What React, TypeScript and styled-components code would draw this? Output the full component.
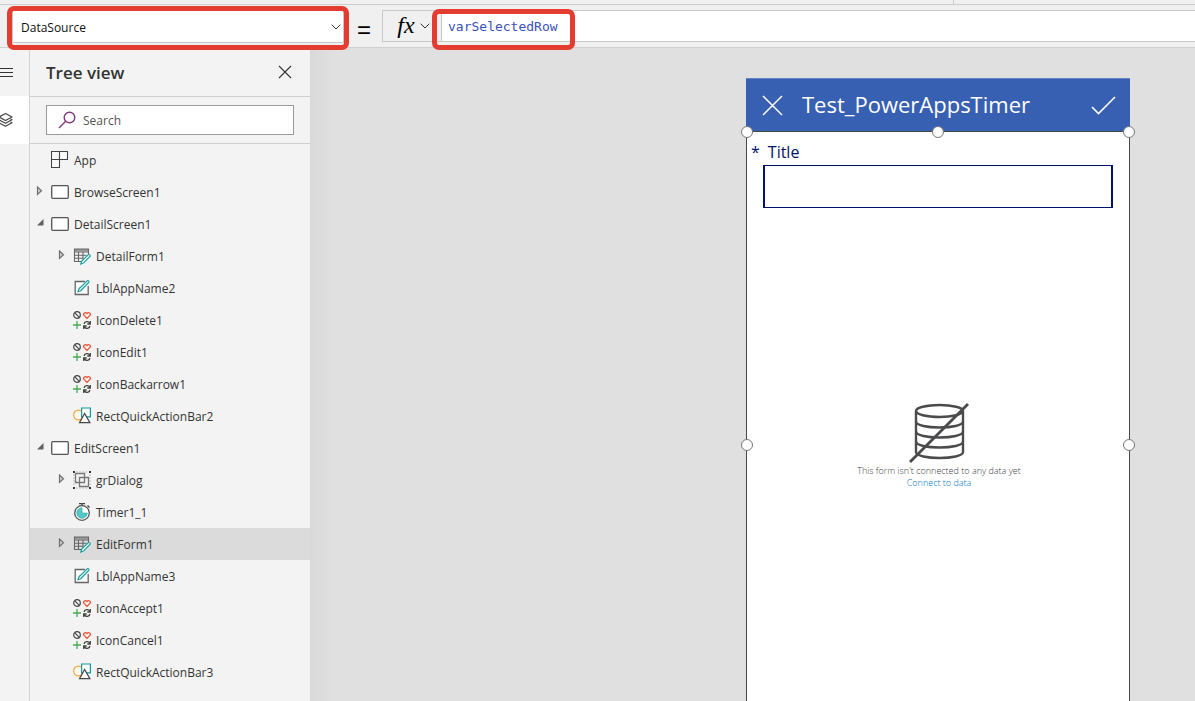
import React from "react";
import styled, { createGlobalStyle, css } from "styled-components";

const GlobalStyle = createGlobalStyle`
  *, *::before, *::after { box-sizing: border-box; }
  body {
    margin: 0;
    overflow: hidden;
    background: #e0e0e0;
    color: #333;
    font-family: "Open Sans", "Noto Sans", sans-serif;
    font-size: 12px;
  }
  button, input, select { font: inherit; color: inherit; margin: 0; border-radius: 0; }
  button { padding: 0; border: 0; background: none; cursor: pointer; }
  svg { display: block; flex: none; }
`;

const Page = styled.div`
  display: flex;
  flex-direction: column;
  height: 100vh;
`;

const RibbonEdge = styled.div`
  display: flex;
  justify-content: flex-end;
  flex: none;
  height: 5px;
  background: #f0f0f0;
  border-bottom: 1px solid #cdcdcd;
`;

const RibbonSection = styled.div`
  width: 242px;
  border-left: 1px solid #cdcdcd;
`;

const FormulaBar = styled.header`
  display: flex;
  align-items: flex-start;
  flex: none;
  height: 43px;
  padding: 5px 0 0 12px;
  background: #f0f0f0;
  border-bottom: 1px solid #d0d0d0;
`;

const Marker = styled.span<{ $inset: string; $width?: string }>`
  position: absolute;
  inset: ${(p) => p.$inset};
  width: ${(p) => p.$width ?? "auto"};
  border: 5px solid #e53c31;
  border-radius: 7px;
  pointer-events: none;
`;

const PropertyPicker = styled.div`
  position: relative;
  width: 332px;
  height: 33px;
  flex: none;
  color: #111;

  svg {
    position: absolute;
    right: 3px;
    top: 14px;
    pointer-events: none;
  }
`;

const PropertySelect = styled.select`
  appearance: none;
  width: 100%;
  height: 100%;
  padding: 2px 24px 0 8px;
  background: #fff;
  border: 1px solid #c8c8c8;
  font-size: 12px;
`;

const EqualsSign = styled.span`
  width: 38px;
  padding: 2px 0 0 2px;
  flex: none;
  text-align: center;
  color: #000;
  font: 24px/36px "Liberation Sans", sans-serif;
`;

const FxButton = styled.button`
  display: flex;
  align-items: center;
  justify-content: center;
  gap: 5px;
  flex: none;
  width: 59px;
  height: 32px;
  padding-left: 3px;
  border: 1px solid #c8c8c8;
  border-right: 0;
  color: #000;
`;

const FxLabel = styled.span`
  padding-bottom: 2px;
  font: italic 400 24px/28px "Liberation Serif", serif;
`;

const FormulaField = styled.div`
  position: relative;
  flex: 1;
  height: 32px;
`;

const FormulaInput = styled.input`
  width: 100%;
  height: 100%;
  padding: 0 7px 0 6px;
  background: #fff;
  border: 1px solid #c8c8c8;
  border-right: 0;
  color: #3b50bd;
  font: 13px "DejaVu Sans Mono", monospace;
`;

const Workspace = styled.div`
  display: flex;
  flex: 1;
  min-height: 0;
`;

const Rail = styled.nav`
  width: 30px;
  flex: none;
  background: #f3f3f3;
  border-right: 1px solid #d2d2d2;
`;

const RailButton = styled.button<{ $active?: boolean }>`
  display: flex;
  align-items: center;
  width: 100%;
  height: 48px;
  background: ${(p) => (p.$active ? "#fff" : "transparent")};
`;

const TreePanel = styled.aside`
  width: 280px;
  flex: none;
  background: #f3f3f3;
`;

const PanelHeader = styled.div`
  display: flex;
  align-items: center;
  justify-content: space-between;
  height: 49px;
  padding: 0 18px 0 16px;
  border-bottom: 1px solid #d0d0d0;
`;

const PanelTitle = styled.h2`
  margin: 0;
  padding-top: 2px;
  font-size: 17px;
  line-height: 24px;
  font-weight: 600;
`;

const SearchArea = styled.div`
  padding: 8px 16px;
  border-bottom: 1px solid #d0d0d0;
`;

const SearchBox = styled.label`
  display: flex;
  align-items: center;
  gap: 7px;
  height: 30px;
  padding-left: 11px;
  background: #fff;
  border: 1px solid #999;

  input {
    flex: 1;
    min-width: 0;
    padding: 0;
    border: 0;
    outline: 0;
    background: none;
  }
  input::placeholder { color: #555; opacity: 1; }
`;

const TreeList = styled.ul`
  margin: 0;
  padding: 0;
  list-style: none;
`;

const TreeRow = styled.button<{ $level: number; $selected?: boolean }>`
  display: flex;
  align-items: center;
  width: 100%;
  height: 32px;
  padding-left: ${(p) => 6 + p.$level * 22}px;
  text-align: left;
  ${(p) =>
    p.$selected &&
    css`
      background: #dbdbdb;
    `}
`;

const CaretSlot = styled.span`
  width: 15px;
  height: 12px;
  flex: none;
`;

const RowLabel = styled.span`
  margin-left: 5px;
  padding-top: 2px;
  line-height: 18px;
`;

const Canvas = styled.main`
  display: flex;
  flex: 1;
  justify-content: flex-end;
  align-items: flex-start;
  min-width: 0;
  padding: 30px 65px 0 0;
  overflow: hidden;
  background: linear-gradient(90deg, #d9d9d9, #e0e0e0 24px);
`;

const Phone = styled.section`
  width: 384px;
  flex: none;
`;

const AppHeader = styled.div`
  display: flex;
  align-items: center;
  height: 53px;
  padding: 0 14px 0 16px;
  background: #3860b2;
  border-top: 1px solid #6384c4;
  color: #fff;
`;

const AppTitle = styled.h1`
  flex: 1;
  margin: 0 0 0 19px;
  padding-bottom: 2px;
  font-size: 22px;
  line-height: 30px;
  font-weight: 400;
`;

const FormFrame = styled.form`
  position: relative;
  height: 628px;
  padding: 9px 16px 0;
  background: #fff;
  border: 1px solid #484848;
`;

const Handle = styled.span<{ $x: string; $y: string }>`
  position: absolute;
  left: ${(p) => p.$x};
  top: ${(p) => p.$y};
  width: 12px;
  height: 12px;
  margin: -6px;
  background: #fff;
  border: 1px solid #777;
  border-radius: 50%;
`;

const FieldLabel = styled.label`
  display: flex;
  gap: 8px;
  margin-left: -12px;
  color: #00126b;
  font-size: 16px;
  line-height: 22px;
`;

const FieldInput = styled.input`
  display: block;
  width: 100%;
  height: 43px;
  margin-top: 2px;
  padding: 0 12px;
  background: #fff;
  border: solid #00126b;
  border-width: 1px 2px;
  font-size: 16px;
`;

const EmptyState = styled.div`
  display: flex;
  flex-direction: column;
  align-items: center;
  margin-top: 195px;
  padding-left: 2px;
  color: #444;
  font-size: 9px;
  line-height: 12px;
  font-weight: 300;

  svg { margin-bottom: 2px; }
  p { margin: 0; }
  a { color: #0078c8; text-decoration: none; }
`;

const ChevronDown = () => (
  <svg width="10" height="6" viewBox="0 0 10 6" fill="none" stroke="#333">
    <path d="M.7.7 5 5 9.3.7" />
  </svg>
);

const CloseIcon = ({ size, stroke }: { size: number; stroke: number }) => (
  <svg width={size} height={size} viewBox={`0 0 ${size} ${size}`} fill="none" stroke="currentColor" strokeWidth={stroke}>
    <path d={`M1 1 ${size - 1} ${size - 1}M${size - 1} 1 1 ${size - 1}`} />
  </svg>
);

const MenuIcon = () => (
  <svg width="14" height="12" viewBox="0 0 14 12" stroke="#333">
    <path d="M0 2.500h13M0 6.500h13M0 10.500h13" />
  </svg>
);

const LayersIcon = () => (
  <svg width="14" height="16" viewBox="0 0 14 16" fill="none" stroke="#444" strokeWidth="1.2" strokeLinejoin="round">
    <path d="M5.500 1.500 12 5 5.500 8.500 -1 5zM0 7.200l-1 .6 6.500 3.500L12 7.800l-1.500-.8M0 10.200l-1 .6 6.500 3.500 6.500-3.500-1.500-.8" />
  </svg>
);

const SearchIcon = () => (
  <svg width="18" height="18" viewBox="0 0 18 18" fill="none" stroke="#80397b" strokeWidth="1.4">
    <circle cx="11.500" cy="6.500" r="5.300" />
    <path d="M7.700 10.300 1 17" />
  </svg>
);

const CaretCollapsed = () => (
  <svg width="8" height="10" viewBox="0 0 8 10" fill="#d0d0d0" stroke="#707070" strokeWidth="1.2">
    <path d="M1.500 1v7.500L5.500 4.800z" />
  </svg>
);

const CaretExpanded = () => (
  <svg width="8" height="10" viewBox="0 0 8 10" fill="#606060">
    <path d="M7.500 1v6.500H1z" />
  </svg>
);

const AppIcon = () => (
  <path d="M.5.500h8v8h-8zM8.500.500h8v8h-8zM.5 8.500h8v8h-8z" fill="#fafafa" stroke="#444" strokeWidth="1.100" />
);

const ScreenIcon = () => (
  <rect x=".7" y="2.700" width="16.600" height="12.600" rx="1" fill="#fff" stroke="#555" strokeWidth="1.300" />
);

const FormIcon = () => (
  <>
    <path d="M1.500 2h14v2.500h-14z" fill="#999" />
    <path d="M9 14.500H1.500V2h14v5M1.500 5h14M1.500 8.200h12M1.500 11.300h9M5.500 5v9.500M10 5v7.500" fill="none" stroke="#666" strokeWidth="1.100" />
    <path d="M7.800 17l.9-3 6.600-6.300c1-.7 2.400.7 1.700 1.800l-6.300 6.400z" fill="#e6fafa" stroke="#149a9c" strokeWidth="1.100" />
  </>
);

const LabelIcon = () => (
  <>
    <path d="M12 2.500H2.200v13h13V7" fill="#fbfbfb" stroke="#666" strokeWidth="1.300" />
    <path d="M5 12.700l.9-2.900 8.200-8c1-.7 2.400.6 1.700 1.700l-8 8.200z" fill="#d5f1f1" stroke="#149a9c" strokeWidth="1.100" />
  </>
);

const ControlIcon = () => (
  <g fill="none">
    <circle cx="4" cy="4" r="3.300" stroke="#444" strokeWidth="1.200" />
    <path d="M1.800 1.800 6.300 6.300" stroke="#444" strokeWidth="1.200" />
    <path d="M14 7.400 10.900 4.200C9.800 2.500 12.500.3 14 2.500 15.500.3 18.200 2.500 17.100 4.200z" stroke="#eb4d2c" strokeWidth="1.200" />
    <path d="M4 10v8M0 14h8" stroke="#4aa857" strokeWidth="1.300" />
    <path d="M11 13c.7-3 4.500-3 5.700-.9M17.300 10v3h-3M17 15c-.7 3-4.500 3-5.700.9M10.700 18v-3h3" stroke="#444" strokeWidth="1.300" />
  </g>
);

const ShapeIcon = () => (
  <>
    <circle cx="5.500" cy="8" r="4.900" fill="#fff9ef" stroke="#f4a942" strokeWidth="1.200" />
    <path d="M8.600 1h8.800v8.800H8.600z" fill="#f7fdfd" stroke="#149a9c" strokeWidth="1.200" />
    <path d="M11.600 6.500 6.500 15.700h10.400z" fill="#fff" stroke="#444" strokeWidth="1.200" />
  </>
);

const GroupIcon = () => (
  <>
    <path d="M2.500 2.500h9v9h-9zM6.500 6.500h9v9h-9z" fill="none" stroke="#777" strokeWidth="1.300" />
    <path d="M3 1h12M3 17h12M1 3v12M17 3v12" stroke="#bbb" strokeDasharray="2 1" />
    <path d="M0 0h2v2H0zM16 0h2v2h-2zM0 16h2v2H0zM16 16h2v2h-2z" fill="#333" />
  </>
);

const TimerIcon = () => (
  <>
    <circle cx="9" cy="10" r="7.300" fill="#fff" stroke="#555" strokeWidth="1.300" />
    <path d="M9 10V4.700A5.300 5.300 0 1 0 14.300 10z" fill="#55c8c6" stroke="#26a9a9" strokeWidth=".6" />
    <path d="M6 .7h6M9 .7v2M14.500 2.500l2 2" stroke="#444" strokeWidth="1.300" />
  </>
);

const icons = {
  app: AppIcon,
  screen: ScreenIcon,
  form: FormIcon,
  label: LabelIcon,
  control: ControlIcon,
  shape: ShapeIcon,
  group: GroupIcon,
  timer: TimerIcon,
};

const DisconnectedIcon = () => (
  <svg width="62" height="60" viewBox="0 0 62 60" fill="none" stroke="#4b4a4d" strokeWidth="2.400">
    <ellipse cx="31.500" cy="8" rx="23.500" ry="6" />
    <path d="M8 8v41c0 8 47 8 47 0V8" />
    <path d="M8 18.500c0 8 47 8 47 0M8 28.500c0 8 47 8 47 0M8 38.500c0 8 47 8 47 0" />
    <path d="M2 59 60 1" strokeWidth="2.800" />
  </svg>
);

type Node = {
  name: string;
  icon: keyof typeof icons;
  level: number;
  open?: boolean;
  selected?: boolean;
};

const nodes: Node[] = [
  { name: "App", icon: "app", level: 0 },
  { name: "BrowseScreen1", icon: "screen", level: 0, open: false },
  { name: "DetailScreen1", icon: "screen", level: 0, open: true },
  { name: "DetailForm1", icon: "form", level: 1, open: false },
  { name: "LblAppName2", icon: "label", level: 1 },
  { name: "IconDelete1", icon: "control", level: 1 },
  { name: "IconEdit1", icon: "control", level: 1 },
  { name: "IconBackarrow1", icon: "control", level: 1 },
  { name: "RectQuickActionBar2", icon: "shape", level: 1 },
  { name: "EditScreen1", icon: "screen", level: 0, open: true },
  { name: "grDialog", icon: "group", level: 1, open: false },
  { name: "Timer1_1", icon: "timer", level: 1 },
  { name: "EditForm1", icon: "form", level: 1, open: false, selected: true },
  { name: "LblAppName3", icon: "label", level: 1 },
  { name: "IconAccept1", icon: "control", level: 1 },
  { name: "IconCancel1", icon: "control", level: 1 },
  { name: "RectQuickActionBar3", icon: "shape", level: 1 },
];

function TreeItem({ name, icon, level, open, selected }: Node) {
  const Glyph = icons[icon];
  return (
    <li>
      <TreeRow type="button" $level={level} $selected={selected} aria-expanded={open}>
        <CaretSlot>
          {open === true && <CaretExpanded />}
          {open === false && <CaretCollapsed />}
        </CaretSlot>
        <svg width="18" height="18" viewBox="0 0 18 18" aria-hidden="true">
          <Glyph />
        </svg>
        <RowLabel>{name}</RowLabel>
      </TreeRow>
    </li>
  );
}

export default function App() {
  return (
    <Page>
      <GlobalStyle />
      <RibbonEdge>
        <RibbonSection />
      </RibbonEdge>
      <FormulaBar>
        <PropertyPicker>
          <PropertySelect aria-label="Property" defaultValue="DataSource">
            <option>DataSource</option>
          </PropertySelect>
          <ChevronDown />
          <Marker $inset="-4px -5px -7px -5px" />
        </PropertyPicker>
        <EqualsSign>=</EqualsSign>
        <FxButton type="button" aria-label="Insert function">
          <FxLabel>fx</FxLabel>
          <ChevronDown />
        </FxButton>
        <FormulaField>
          <FormulaInput aria-label="Formula" defaultValue="varSelectedRow" spellCheck={false} />
          <Marker $inset="-1px auto -8px -9px" $width="143px" />
        </FormulaField>
      </FormulaBar>
      <Workspace>
        <Rail>
          <RailButton type="button" aria-label="Menu">
            <MenuIcon />
          </RailButton>
          <RailButton type="button" aria-label="Tree view" $active>
            <LayersIcon />
          </RailButton>
        </Rail>
        <TreePanel>
          <PanelHeader>
            <PanelTitle>Tree view</PanelTitle>
            <button type="button" aria-label="Close">
              <CloseIcon size={14} stroke={1.1} />
            </button>
          </PanelHeader>
          <SearchArea>
            <SearchBox>
              <SearchIcon />
              <input type="text" placeholder="Search" aria-label="Search" />
            </SearchBox>
          </SearchArea>
          <TreeList>
            {nodes.map((node) => (
              <TreeItem key={node.name} {...node} />
            ))}
          </TreeList>
        </TreePanel>
        <Canvas>
          <Phone>
            <AppHeader>
              <button type="button" aria-label="Cancel">
                <CloseIcon size={21} stroke={1.5} />
              </button>
              <AppTitle>Test_PowerAppsTimer</AppTitle>
              <button type="button" aria-label="Accept">
                <svg width="25" height="19" viewBox="0 0 25 19" fill="none" stroke="currentColor" strokeWidth="1.600">
                  <path d="M1 11l6.500 6.500L24 1" />
                </svg>
              </button>
            </AppHeader>
            <FormFrame>
              <FieldLabel htmlFor="title-field">
                <span>*</span>
                <span>Title</span>
              </FieldLabel>
              <FieldInput id="title-field" type="text" />
              <EmptyState>
                <DisconnectedIcon />
                <p>This form isn't connected to any data yet</p>
                <a href="#connect">Connect to data</a>
              </EmptyState>
              <Handle $x="0%" $y="0%" />
              <Handle $x="50%" $y="0%" />
              <Handle $x="100%" $y="0%" />
              <Handle $x="0%" $y="50%" />
              <Handle $x="100%" $y="50%" />
            </FormFrame>
          </Phone>
        </Canvas>
      </Workspace>
    </Page>
  );
}
